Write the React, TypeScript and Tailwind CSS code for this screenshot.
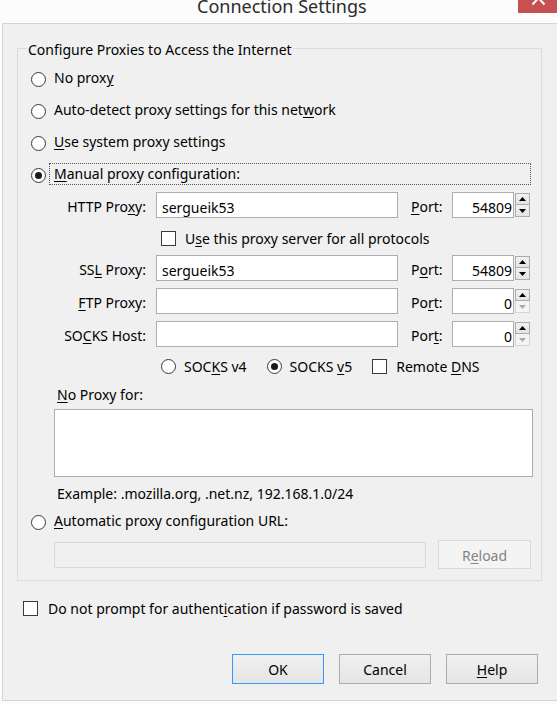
import React from "react";

const U = ({ children }: { children: React.ReactNode }) => (
  <span className="underline decoration-1 underline-offset-[2px]">{children}</span>
);

function Radio({ checked = false }: { checked?: boolean }) {
  return (
    <span className="mt-[2px] flex h-[15px] w-[15px] shrink-0 items-center justify-center rounded-full border border-[#3a3a3a] bg-white">
      {checked && <span className="h-[7px] w-[7px] rounded-full bg-[#1a1a1a]" />}
    </span>
  );
}

function Check() {
  return <span className="block h-[15px] w-[15px] shrink-0 border border-[#3a3a3a] bg-white" />;
}

function Spin({ value, downDisabled = false }: { value: string; downDisabled?: boolean }) {
  return (
    <div className="flex h-[26px] items-start">
      <input
        readOnly
        value={value}
        className="h-[26px] w-[62px] border border-[#abadb3] bg-white pr-[1px] pt-[4px] text-right text-[14px] leading-[18px] text-black outline-none"
      />
      <div className="ml-[1px] flex w-[15px] flex-col pt-[1px]">
        <div className="flex h-[12px] items-center justify-center border border-[#acacac] bg-linear-to-b from-[#f2f2f2] to-[#e3e3e3]">
          <svg width="7" height="4" viewBox="0 0 7 4">
            <path d="M0 4 L3.5 0 L7 4 Z" fill="#000" />
          </svg>
        </div>
        {downDisabled ? (
          <div className="flex h-[12px] items-center justify-center border border-t-0 border-[#d5d5d5] bg-[#f4f4f4]">
            <svg width="7" height="4" viewBox="0 0 7 4">
              <path d="M0 0 L3.5 4 L7 0 Z" fill="#a8a8a8" />
            </svg>
          </div>
        ) : (
          <div className="flex h-[12px] items-center justify-center border border-t-0 border-[#acacac] bg-linear-to-b from-[#f2f2f2] to-[#e3e3e3]">
            <svg width="7" height="4" viewBox="0 0 7 4">
              <path d="M0 0 L3.5 4 L7 0 Z" fill="#000" />
            </svg>
          </div>
        )}
      </div>
    </div>
  );
}

function ProxyRow({
  label,
  value,
  portLabel,
  port,
  downDisabled = false,
  top,
}: {
  label: React.ReactNode;
  value: string;
  portLabel: React.ReactNode;
  port: string;
  downDisabled?: boolean;
  top: string;
}) {
  return (
    <div className={`flex h-[26px] items-center ${top}`}>
      <div className="w-[128px] pt-[4px] text-right leading-[18px]">{label}</div>
      <input
        readOnly
        value={value}
        className="ml-[10px] h-[26px] w-[242px] border border-[#abadb3] bg-white pl-[5px] pt-[4px] text-[14px] leading-[18px] text-black outline-none"
      />
      <div className="ml-[13px] w-[41px] pt-[4px] leading-[18px]">{portLabel}</div>
      <Spin value={port} downDisabled={downDisabled} />
    </div>
  );
}

function RadioRow({ children, checked = false }: { children: React.ReactNode; checked?: boolean }) {
  return (
    <div className="flex h-[32px] items-center pl-[13px]">
      <Radio checked={checked} />
      <span className="ml-[8px] leading-[20px]">{children}</span>
    </div>
  );
}

function Button({ children, primary = false }: { children: React.ReactNode; primary?: boolean }) {
  return (
    <div
      className={`flex h-[30px] w-[92px] items-center justify-center border pt-[2px] leading-[18px] bg-linear-to-b from-[#f0f0f0] to-[#e5e5e5] ${
        primary ? "border-[#3399ff]" : "border-[#acacac]"
      }`}
    >
      {children}
    </div>
  );
}

export default function App() {
  return (
    <div className="h-[705px] w-[557px] overflow-hidden bg-[#fcfcfc] font-['Noto_Sans',sans-serif] text-[14px] text-black">
      {/* Title bar */}
      <div className="flex h-[23px] overflow-hidden">
        <div className="-mt-[4px] whitespace-nowrap pl-[197px] text-[18px] leading-[20px] text-[#2b2b2b]">
          Connection Settings
        </div>
        <div className="ml-auto flex h-[13px] w-[39px] justify-center overflow-hidden bg-[#c75050]">
          <svg width="39" height="13" viewBox="0 0 39 13">
            <path d="M14.5 4.5 L20.5 -2 L26.5 4.5" stroke="#fff" strokeWidth="2" fill="none" />
          </svg>
        </div>
      </div>

      {/* Client area */}
      <div className="ml-[2px] h-[678px] border-b border-l border-t border-[#d4d4d4] bg-[#f0f0f0]">
        <fieldset className="ml-[14px] mt-[13px] h-[544px] w-[525px] border border-[#dcdcdc]">
          <legend className="ml-[9px] px-[1px] pt-[4px] leading-[18px]">
            Configure Proxies to Access the Internet
          </legend>
          <div className="flex flex-col pt-[3px]">
            <RadioRow>
              No prox<U>y</U>
            </RadioRow>
            <RadioRow>
              Auto-detect proxy settings for this net<U>w</U>ork
            </RadioRow>
            <RadioRow>
              <U>U</U>se system proxy settings
            </RadioRow>
            <div className="flex h-[32px] items-center pl-[13px]">
              <Radio checked />
              <span className="ml-[3px] flex h-[22px] w-[482px] items-center border border-dotted border-[#555] pl-[4px] leading-[20px]">
                <span>
                  <U>M</U>anual proxy configuration:
                </span>
              </span>
            </div>

            <ProxyRow
              top="mt-[2px]"
              label={
                <>
                  HTTP Pro<U>x</U>y:
                </>
              }
              value="sergueik53"
              portLabel={
                <>
                  <U>P</U>ort:
                </>
              }
              port="54809"
            />

            <div className="mt-[13px] flex h-[15px] items-center pl-[143px]">
              <Check />
              <span className="ml-[9px] leading-[15px]">
                U<U>s</U>e this proxy server for all protocols
              </span>
            </div>

            <ProxyRow
              top="mt-[9px]"
              label={
                <>
                  SS<U>L</U> Proxy:
                </>
              }
              value="sergueik53"
              portLabel={
                <>
                  P<U>o</U>rt:
                </>
              }
              port="54809"
            />
            <ProxyRow
              top="mt-[7px]"
              label={
                <>
                  <U>F</U>TP Proxy:
                </>
              }
              value=""
              portLabel={
                <>
                  Po<U>r</U>t:
                </>
              }
              port="0"
              downDisabled
            />
            <ProxyRow
              top="mt-[7px]"
              label={
                <>
                  SO<U>C</U>KS Host:
                </>
              }
              value=""
              portLabel={
                <>
                  Por<U>t</U>:
                </>
              }
              port="0"
              downDisabled
            />

            <div className="mt-[12px] flex h-[15px] items-center pl-[143px]">
              <span className="flex h-[15px] w-[15px] shrink-0 items-center justify-center rounded-full border border-[#3a3a3a] bg-white" />
              <span className="ml-[8px] leading-[15px]">
                SOC<U>K</U>S v4
              </span>
              <span className="ml-[20px] flex h-[15px] w-[15px] shrink-0 items-center justify-center rounded-full border border-[#3a3a3a] bg-white">
                <span className="h-[7px] w-[7px] rounded-full bg-[#1a1a1a]" />
              </span>
              <span className="ml-[8px] leading-[15px]">
                SOCKS <U>v</U>5
              </span>
              <span className="ml-[20px]">
                <Check />
              </span>
              <span className="ml-[9px] leading-[15px]">
                Remote <U>D</U>NS
              </span>
            </div>

            <div className="mt-[11px] pl-[39px] leading-[20px]">
              <U>N</U>o Proxy for:
            </div>
            <textarea
              readOnly
              value=""
              className="ml-[36px] mt-[4px] h-[68px] w-[479px] resize-none border border-[#abadb3] bg-white outline-none"
            />
            <div className="mt-[7px] pl-[39px] leading-[20px]">
              Example: .mozilla.org, .net.nz, 192.168.1.0/24
            </div>

            <div className="mt-[7px] flex h-[20px] items-center pl-[13px]">
              <Radio />
              <span className="ml-[8px] leading-[20px]">
                <U>A</U>utomatic proxy configuration URL:
              </span>
            </div>

            <div className="mt-[9px] flex h-[29px] items-center pl-[36px]">
              <div className="h-[26px] w-[372px] border border-[#d9d9d9] bg-[#f0f0f0]" />
              <div className="ml-[12px] flex h-[29px] w-[93px] items-center justify-center border border-[#d9d9d9] bg-[#f4f4f4] pt-[2px] leading-[18px] text-[#838383]">
                <span>
                  R<U>e</U>load
                </span>
              </div>
            </div>
          </div>
        </fieldset>

        <div className="ml-[20px] mt-[20px] flex h-[15px] items-center">
          <Check />
          <span className="ml-[10px] leading-[15px]">
            Do not prompt for authent<U>i</U>cation if password is saved
          </span>
        </div>

        <div className="mt-[38px] flex gap-[15px] pl-[229px]">
          <Button primary>OK</Button>
          <Button>Cancel</Button>
          <Button>
            <span>
              <U>H</U>elp
            </span>
          </Button>
        </div>
      </div>
    </div>
  );
}
